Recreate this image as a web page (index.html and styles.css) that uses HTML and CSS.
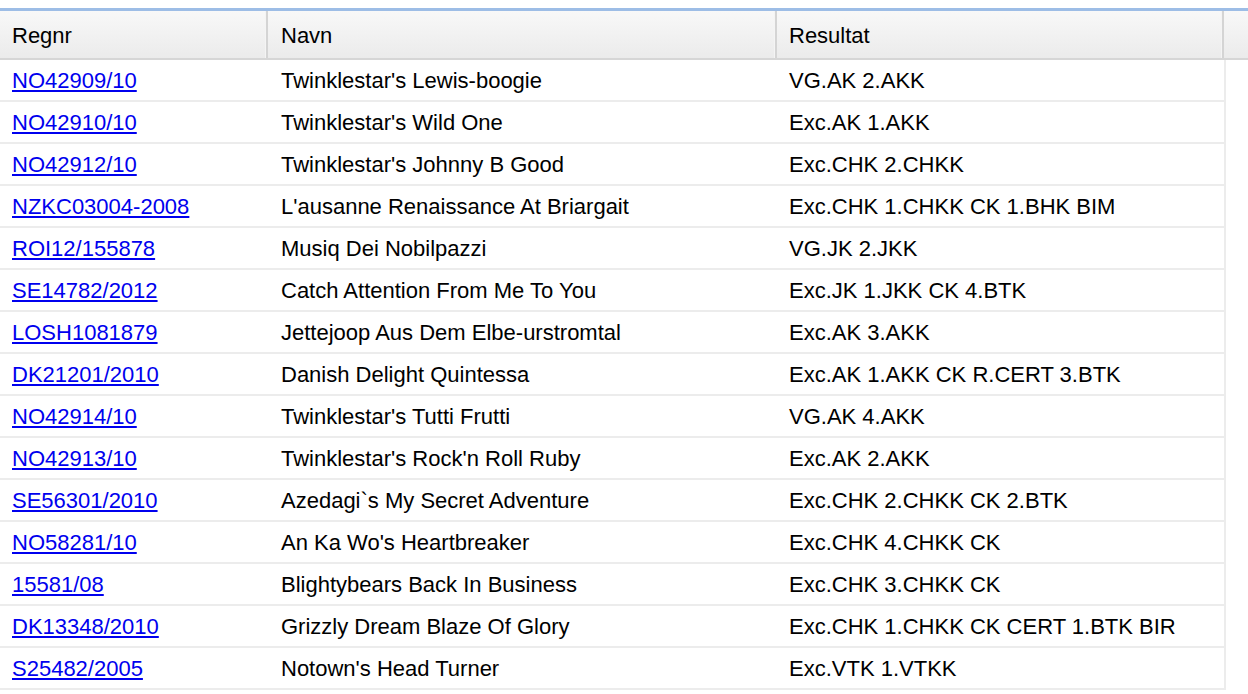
FILE: index.html
```html
<!DOCTYPE html>
<html>
<head>
<meta charset="utf-8">
<link rel="stylesheet" href="styles.css">
</head>
<body>
<div class="grid">
  <div class="head">
    <div class="hc">Regnr</div>
    <div class="hc">Navn</div>
    <div class="hc">Resultat</div>
    <div class="hc filler"></div>
  </div>
  <div class="rows">
    <div class="row"><div class="c"><a href="#">NO42909/10</a></div><div class="c">Twinklestar's Lewis-boogie</div><div class="c">VG.AK 2.AKK</div></div>
    <div class="row"><div class="c"><a href="#">NO42910/10</a></div><div class="c">Twinklestar's Wild One</div><div class="c">Exc.AK 1.AKK</div></div>
    <div class="row"><div class="c"><a href="#">NO42912/10</a></div><div class="c">Twinklestar's Johnny B Good</div><div class="c">Exc.CHK 2.CHKK</div></div>
    <div class="row"><div class="c"><a href="#">NZKC03004-2008</a></div><div class="c">L'ausanne Renaissance At Briargait</div><div class="c">Exc.CHK 1.CHKK CK 1.BHK BIM</div></div>
    <div class="row"><div class="c"><a href="#">ROI12/155878</a></div><div class="c">Musiq Dei Nobilpazzi</div><div class="c">VG.JK 2.JKK</div></div>
    <div class="row"><div class="c"><a href="#">SE14782/2012</a></div><div class="c">Catch Attention From Me To You</div><div class="c">Exc.JK 1.JKK CK 4.BTK</div></div>
    <div class="row"><div class="c"><a href="#">LOSH1081879</a></div><div class="c">Jettejoop Aus Dem Elbe-urstromtal</div><div class="c">Exc.AK 3.AKK</div></div>
    <div class="row"><div class="c"><a href="#">DK21201/2010</a></div><div class="c">Danish Delight Quintessa</div><div class="c">Exc.AK 1.AKK CK R.CERT 3.BTK</div></div>
    <div class="row"><div class="c"><a href="#">NO42914/10</a></div><div class="c">Twinklestar's Tutti Frutti</div><div class="c">VG.AK 4.AKK</div></div>
    <div class="row"><div class="c"><a href="#">NO42913/10</a></div><div class="c">Twinklestar's Rock'n Roll Ruby</div><div class="c">Exc.AK 2.AKK</div></div>
    <div class="row"><div class="c"><a href="#">SE56301/2010</a></div><div class="c">Azedagi`s My Secret Adventure</div><div class="c">Exc.CHK 2.CHKK CK 2.BTK</div></div>
    <div class="row"><div class="c"><a href="#">NO58281/10</a></div><div class="c">An Ka Wo's Heartbreaker</div><div class="c">Exc.CHK 4.CHKK CK</div></div>
    <div class="row"><div class="c"><a href="#">15581/08</a></div><div class="c">Blightybears Back In Business</div><div class="c">Exc.CHK 3.CHKK CK</div></div>
    <div class="row"><div class="c"><a href="#">DK13348/2010</a></div><div class="c">Grizzly Dream Blaze Of Glory</div><div class="c">Exc.CHK 1.CHKK CK CERT 1.BTK BIR</div></div>
    <div class="row"><div class="c"><a href="#">S25482/2005</a></div><div class="c">Notown's Head Turner</div><div class="c">Exc.VTK 1.VTKK</div></div>
  </div>
</div>
</body>
</html>
```

FILE: styles.css
```css
html, body {
  margin: 0;
  padding: 0;
  background: #ffffff;
}
body {
  padding-top: 8px;
  font-family: "Liberation Sans", Arial, sans-serif;
  font-size: 22px;
  color: #000;
  overflow: hidden;
}
.grid {
  border-top: 3px solid #9dbde6;
  width: 1248px;
}
.head {
  display: grid;
  grid-template-columns: 268px 509px 447px 1fr;
  height: 47px;
  background: linear-gradient(#f8f8f8, #ebebeb);
  border-bottom: 2px solid #d6d6d6;
}
.hc {
  display: flex;
  align-items: center;
  padding-left: 12px;
  padding-top: 2px;
  border-right: 2px solid #d4d4d4;
  box-shadow: inset -1px 0 0 #f4f4f4;
}
.hc:nth-child(2) { padding-left: 13px; }
.hc:nth-child(3) { padding-left: 12px; }
.hc.filler { border-right: none; box-shadow: none; }
.rows {
  width: 1226px;
}
.row {
  display: grid;
  grid-template-columns: 268px 509px 1fr;
  height: 40px;
  border-bottom: 2px solid #ececec;
  border-right: 2px solid #ececec;
}
.c {
  display: flex;
  align-items: center;
  padding-left: 12px;
  padding-top: 1px;
  white-space: nowrap;
}
.c:nth-child(2) { padding-left: 13px; }
.c a {
  color: #0000ee;
  text-decoration: underline;
}
```
